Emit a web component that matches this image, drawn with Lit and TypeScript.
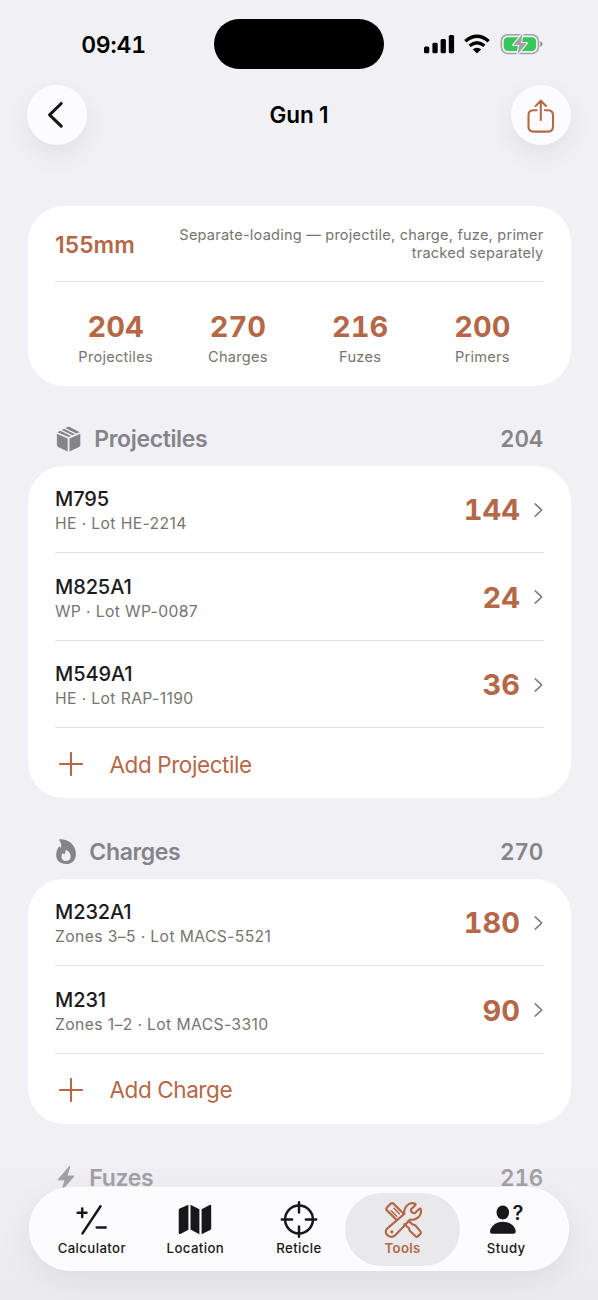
import { LitElement, html, css, svg, nothing } from "lit";
import { customElement, property } from "lit/decorators.js";
import { classMap } from "lit/directives/class-map.js";

type Item = { name: string; detail: string; count: number };

const icons: Record<string, unknown> = {
  box: svg`<svg class="i-box" viewBox="0 0 24 26" width="25" height="26">
    <path fill="currentColor" d="M0.4 7.8 11.2 12.6V25.6L1.6 20.9Q0.4 20.2 0.4 19zM23.8 7.8 13 12.6V25.6L22.6 20.9Q23.8 20.2 23.8 19zM0.9 6.2 3.800 4.700 14.600 9.900 12.1 11.1zM9 2 10.9 1Q12.1 0.3 13.3 1L23.2 6.2 19.800 7.600z"/>
    <path fill="currentColor" d="M5.300 3.900 7.600 2.700 18.400 8.200 16.100 9.200z"/></svg>`,
  flame: svg`<svg class="i-flame" viewBox="0 0 20 26" width="20" height="26">
    <path fill="currentColor" fill-rule="evenodd" d="M3.2 1.3C2.7 0.6 3.3 0.3 4 0.3C13 0.3 19.9 6.3 19.9 14.9C19.9 21.2 15.8 25 10 25C4.200 25 0.200 21.300 0.200 16C0.200 11.800 1.900 8.700 3.200 7.600C3.800 7.100 4.200 7.500 4.300 8L4.800 9.500C5.800 6.500 5.300 3.900 3.200 1.300zM10.400 11C10 10.700 9.600 10.900 9.600 11.400C9.600 13.200 8.800 14.300 8.200 15.400L7.200 14.500C6.800 14.200 6.500 14.300 6.300 14.700C5.700 15.700 5.500 16.700 5.500 17.700C5.500 20.300 7.300 22.100 10 22.100C12.700 22.100 14.600 20.200 14.600 17.400C14.600 14.800 13.100 12.500 10.400 11z"/></svg>`,
  bolt: svg`<svg class="i-bolt" viewBox="-1 0 20 26" width="20" height="26">
    <path fill="currentColor" stroke="currentColor" stroke-width="1" stroke-linejoin="round" d="M12.800 1.200 1 14.800H8L5.300 24.700 17.100 11H10z"/></svg>`,
  plusminus: svg`<svg viewBox="0 0 40 40" width="40" height="40" fill="none" stroke="currentColor" stroke-width="2.500" stroke-linecap="round">
    <path d="M28.500 6.300 10.500 33.400M10.200 8.500V17M5.700 12.700H14.500M24.700 27.500H33.700"/></svg>`,
  map: svg`<svg viewBox="0 0 40 40" width="40" height="40" fill="currentColor">
    <path d="M13.400 4.700V29.800L5.400 33.900Q3.700 34.500 3.700 32.700V10.400Q3.700 9.200 4.700 8.600zM15.500 4.700 24.400 9.300V34.200L15.500 29.600zM26.600 9.200 34.600 5Q36.200 4.400 36.200 6V28.500Q36.200 29.400 35.300 29.900L26.600 34.200z"/></svg>`,
  reticle: svg`<svg viewBox="0 0 40 40" width="40" height="40" fill="none" stroke="currentColor" stroke-width="2.500" stroke-linecap="round">
    <circle cx="20" cy="19.500" r="13.900"/><path d="M20 2.300V12.600M20 26.400V36.700M2.800 19.500H13.100M26.900 19.500H37.200"/></svg>`,
  tools: svg`<svg viewBox="-0.800 0 40 40" width="40" height="40" fill="none" stroke="currentColor" stroke-width="2.200" stroke-linecap="round" stroke-linejoin="round">
    <path d="M12.400 19.600 3.200 10.400Q1.800 8.900 3.200 7.400L6.700 3.900Q8.300 2.500 9.800 3.900L19.600 13.500"/>
    <path stroke-width="1.500" d="M7.500 10.700 12.900 16.200M10.200 8.300 15.600 13.800"/>
    <path d="M24.600 20.900 28.700 24.400 31.400 25.300 36.800 31.600Q37.600 32.800 36.500 33.900L34 36.400Q32.900 37.200 31.800 36.300L25.900 30.700 25.200 28.300 20.600 24.200"/>
    <path d="M4.200 27.900 20.500 13.800C19.600 8.300 24.300 1.600 31 3.600Q32.500 4.200 31.400 5.300L27.300 9.300Q26.900 10.500 27.600 11.700L29 12.900Q30.300 13.600 31.500 12.800L35.600 8.800Q36.900 8 37.100 9.500C38.200 15.900 32.300 20.800 26.400 19.500L11.500 35.200C7.100 39 0.800 34.800 2.300 30Q2.900 28.800 4.200 27.900z"/>
    <circle cx="8" cy="31.800" r="1.600" fill="currentColor" stroke="none"/></svg>`,
  study: svg`<svg viewBox="-0.500 0 40 40" width="40" height="40" fill="currentColor">
    <ellipse cx="16.300" cy="12.500" rx="6.300" ry="6.900"/><path d="M5.800 33.700Q3.500 33.700 3.500 31.700C3.500 27.500 8.300 21.700 16.300 21.700C24.300 21.700 29.200 27.500 29.200 31.700Q29.200 33.700 26.900 33.700z"/>
    <text class="q" x="26" y="19.800">?</text></svg>`,
};

@customElement("stock-section")
class StockSection extends LitElement {
  @property() heading = "";
  @property() icon = "";
  @property() add = "";
  @property({ type: Number }) total = 0;
  @property({ type: Array }) items: Item[] = [];

  static styles = css`
    :host { display: block; }
    .head { height: 80.500px; display: flex; align-items: flex-end; justify-content: space-between; padding: 0 28px 10px 28px; box-sizing: border-box; color: #85848a; font-size: 23px; font-weight: 600; line-height: 34px; white-space: nowrap; }
    .left { display: flex; align-items: center; gap: 13.300px; letter-spacing: -0.35px; }
    .left svg { display: block; }
    .total { font-size: 22.500px; font-variant-numeric: tabular-nums; letter-spacing: -0.2px; margin-right: -0.2px; }
    .card { background: #fff; border-radius: 36px; padding: 0 27px; }
    .row { height: 86.400px; border-bottom: 1px solid #e3e3e5; display: flex; align-items: center; justify-content: space-between; white-space: nowrap; }
    .text { padding-top: 5px; }
    .name { font-size: 20px; line-height: 25px; font-weight: 500; color: #1b1b1d; letter-spacing: -0.1px; }
    .detail { font-size: 15.700px; line-height: 24px; color: #757570; letter-spacing: 0.380px; }
    .value { display: flex; align-items: center; gap: 14px; color: #b46848; font-size: 29px; font-weight: 700; font-variant-numeric: tabular-nums; padding-top: 1.500px; }
    .value svg { display: block; }
    .add { height: 70.300px; display: flex; align-items: center; color: #b46848; font-size: 22.500px; gap: 26.500px; padding-left: 4px; padding-top: 2px; box-sizing: border-box; letter-spacing: -0.42px; white-space: nowrap; }
  `;

  render() {
    return html`
      <div class="head">
        <div class="left">${icons[this.icon]}<span>${this.heading}</span></div>
        <span class="total">${this.total}</span>
      </div>
      ${this.add ? html`<div class="card">
        ${this.items.map((it) => html`
          <div class="row">
            <div class="text"><div class="name">${it.name}</div><div class="detail">${it.detail}</div></div>
            <div class="value"><span>${it.count}</span>
              <svg width="10" height="16" viewBox="0 0 10 16" fill="none" stroke="#77777a" stroke-width="1.700" stroke-linecap="round" stroke-linejoin="round"><path d="M1.300 2 7.700 8 1.300 14"/></svg>
            </div>
          </div>`)}
        <div class="add">
          <svg width="24" height="24" viewBox="0 0 24 24" fill="none" stroke="currentColor" stroke-width="2.100" stroke-linecap="round"><path d="M12 1V23M1 12H23"/></svg>
          <span>${this.add}</span>
        </div>
      </div>` : nothing}`;
  }
}

@customElement("tab-bar")
class TabBar extends LitElement {
  static styles = css`
    :host { display: block; }
    .bar { height: 84px; box-sizing: border-box; border-radius: 42px; background: #fcfcfe; display: flex; padding: 5px 11px 5px 11px; box-shadow: 0 10px 36px rgba(0,0,0,.07), inset 0 0 0 1px rgba(255,255,255,.8); }
    .tab { flex: 1 1 0; min-width: 0; display: flex; justify-content: center; color: #18181a; height: 74px; }
    .in { display: flex; flex-direction: column; align-items: center; padding-top: 7px; box-sizing: border-box; border-radius: 37px; flex: none; width: 100%; height: 73px; margin-top: 0.500px; }
    .on .in { background: #e9e9eb; color: #b46848; width: 115px; margin-left: -6px; margin-right: -6px; }
    .in svg { display: block; flex: none; }
    .label { font-size: 13.200px; line-height: 16px; font-weight: 500; letter-spacing: 0.400px; white-space: nowrap; }
    .on .label { font-weight: 600; letter-spacing: 0.3px; }
    .q { font: 600 20px Inter, sans-serif; }
  `;
  tabs = [["plusminus", "Calculator"], ["map", "Location"], ["reticle", "Reticle"], ["tools", "Tools"], ["study", "Study"]];
  render() {
    return html`<div class="bar">${this.tabs.map(([icon, label]) => html`
      <div class=${classMap({ tab: true, on: label === "Tools" })}><div class="in">${icons[icon]}<span class="label">${label}</span></div></div>`)}</div>`;
  }
}

@customElement("app-root")
class AppRoot extends LitElement {
  static styles = css`
    :host { display: block; position: relative; height: 1300px; overflow: hidden; background: #f1f0f5; font-family: Inter, "Liberation Sans", sans-serif; }
    .status { height: 84px; display: grid; grid-template-columns: 214px 170px 214px; box-sizing: border-box; padding-top: 19px; }
    .time { padding-left: 13px; text-align: center; font-size: 23px; line-height: 52px; font-weight: 600; letter-spacing: -0.2px; font-variant-numeric: tabular-nums; }
    .island { height: 50px; border-radius: 25px; background: #000; }
    .sys { display: flex; padding: 14px 0 0 39px; }
    .nav { height: 61px; display: flex; align-items: center; justify-content: space-between; padding: 0 27px; }
    .round { width: 60px; height: 60px; border-radius: 50%; background: #fcfcfe; box-shadow: 0 10px 26px rgba(0,0,0,.065); }
    .round svg { display: block; }
    .title { font-size: 22.500px; font-weight: 600; letter-spacing: -0.1px; }
    .body { padding: 61px 27px 0 28px; }
    .summary { height: 179.500px; background: #fff; border-radius: 36px; padding: 0 27px; }
    .top { height: 75px; display: flex; justify-content: space-between; align-items: center; border-bottom: 1px solid #e3e3e5; color: #b46848; }
    .caliber { font-size: 22.800px; font-weight: 600; letter-spacing: 0.1px; padding-top: 1px; }
    .note { text-align: right; color: #757570; font-size: 14.600px; line-height: 18px; letter-spacing: 0.2px; white-space: nowrap; padding-right: 0.500px; }
    .stats { display: grid; grid-template-columns: repeat(4, 1fr); padding-top: 27px; text-align: center; }
    .stats div { margin-left: -0.500px; }
    .num { font-size: 29px; line-height: 36px; font-weight: 700; color: #b46848; font-variant-numeric: tabular-nums; }
    .cap { font-size: 14.600px; line-height: 25px; color: #757570; letter-spacing: 0.250px; }
    .dim { opacity: .85; }
    .tabs { position: absolute; left: 29px; top: 1187px; width: 540px; }
    .shade { position: absolute; left: 0; right: 0; bottom: 0; height: 170px; background: linear-gradient(rgba(241,240,245,0), rgba(232,232,236,.55)); }
  `;

  render() {
    const stats: [number, string][] = [[204, "Projectiles"], [270, "Charges"], [216, "Fuzes"], [200, "Primers"]];
    return html`
      <div class="status">
        <div class="time">09:41</div>
        <div class="island"></div>
        <div class="sys">
          <svg width="122" height="24" viewBox="423 33 122 24">
            <rect x="424" y="46.500" width="5.300" height="6.800" rx="1.500"/><rect x="432.400" y="42.700" width="5.300" height="10.600" rx="1.500"/><rect x="440.600" y="39" width="5.300" height="14.300" rx="1.500"/><rect x="448.800" y="35" width="5.300" height="18.300" rx="1.500"/>
            <g fill="none" stroke="#000" stroke-width="3.300"><path d="M465.300 41.200Q477 31.200 488.700 41.200"/><path d="M469.600 45.800Q477 39.600 484.400 45.800"/></g>
            <path d="M472.800 49.300Q477 46 481.200 49.300L477.800 52.800Q477 53.500 476.200 52.800z"/>
            <rect x="501.300" y="34.800" width="37.200" height="18.600" rx="6.200" fill="none" stroke="#a2a1a8" stroke-width="1.500"/>
            <path d="M540.200 41.200Q542.600 42 542.600 44Q542.600 46 540.200 46.900z" fill="#96959c"/>
            <rect x="503.700" y="37.200" width="32.400" height="13.800" rx="4.200" fill="#35c759"/>
            <path d="M522.500 34 513.200 45H519.200L517.500 54.300 526.900 43H520.900z" fill="#a2a1a8" stroke="#f1f0f5" stroke-width="2.200" paint-order="stroke" stroke-linejoin="round"/>
          </svg>
        </div>
      </div>
      <div class="nav">
        <div class="round"><svg width="60" height="60" viewBox="0 0 60 60" fill="none" stroke="#161618" stroke-width="3.100" stroke-linecap="round" stroke-linejoin="round"><path d="M34.200 18.500 22.600 29.900 34.200 41.200"/></svg></div>
        <div class="title">Gun 1</div>
        <div class="round"><svg width="60" height="60" viewBox="0 0 60 60" fill="none" stroke="#b46848" stroke-width="2.100" stroke-linecap="round" stroke-linejoin="round"><path d="M25.600 25.300H22.500Q17.500 25.300 17.500 30.300V41.600Q17.500 46.600 22.500 46.600H37Q42 46.600 42 41.600V30.300Q42 25.300 37 25.300H33.900M29.800 35V16M24.600 20.900 29.800 15.700 35 20.900"/></svg></div>
      </div>
      <div class="body">
        <div class="summary">
          <div class="top"><span class="caliber">155mm</span><div class="note">Separate-loading — projectile, charge, fuze, primer<br>tracked separately</div></div>
          <div class="stats">${stats.map(([n, l]) => html`<div><div class="num">${n}</div><div class="cap">${l}</div></div>`)}</div>
        </div>
        <stock-section icon="box" heading="Projectiles" add="Add Projectile" .total=${204} .items=${[
          { name: "M795", detail: "HE · Lot HE-2214", count: 144 },
          { name: "M825A1", detail: "WP · Lot WP-0087", count: 24 },
          { name: "M549A1", detail: "HE · Lot RAP-1190", count: 36 },
        ]}></stock-section>
        <stock-section icon="flame" heading="Charges" add="Add Charge" .total=${270} .items=${[
          { name: "M232A1", detail: "Zones 3–5 · Lot MACS-5521", count: 180 },
          { name: "M231", detail: "Zones 1–2 · Lot MACS-3310", count: 90 },
        ]}></stock-section>
        <stock-section class="dim" icon="bolt" heading="Fuzes" .total=${216}></stock-section>
      </div>
      <div class="shade"></div>
      <tab-bar class="tabs"></tab-bar>`;
  }
}
